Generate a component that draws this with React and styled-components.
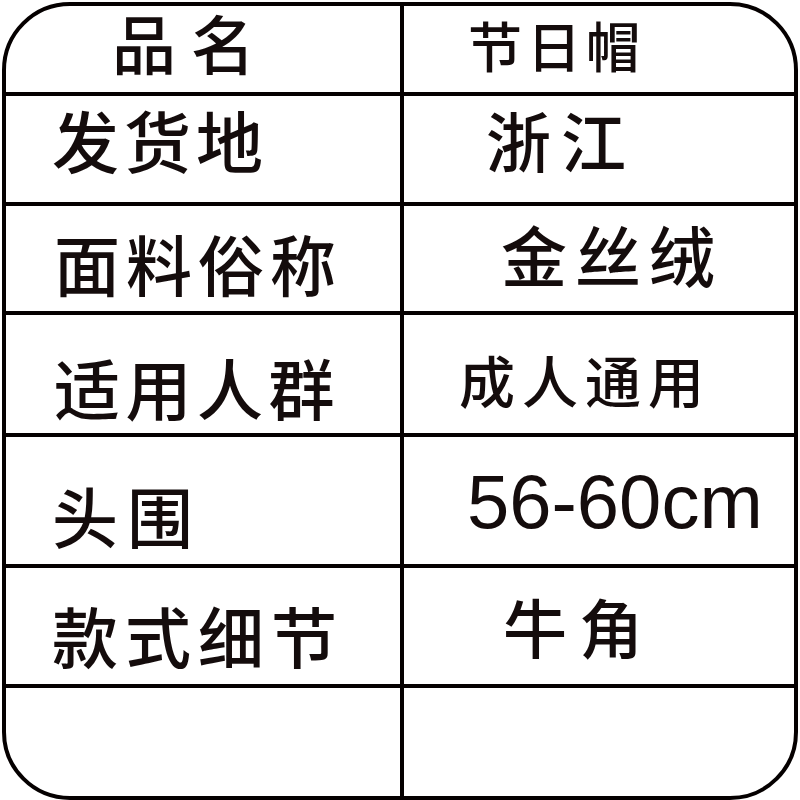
import React from "react";
import styled, { createGlobalStyle } from "styled-components";

const Global = createGlobalStyle`
  html, body { margin: 0; padding: 0; background: #fff; }
  body { width: 800px; height: 800px; overflow: hidden; }
`;

const Page = styled.div`
  width: 800px;
  height: 800px;
  padding: 2px 2px 0 2px;
  box-sizing: border-box;
  background: #fff;
`;

const Table = styled.div`
  width: 796px;
  height: 798px;
  box-sizing: border-box;
  border: 4px solid #050000;
  border-radius: 68px;
  display: flex;
  flex-direction: column;
`;

const Row = styled.div`
  display: flex;
  height: ${(p) => p.$h}px;
  flex: none;
  border-bottom: ${(p) => (p.$last ? "none" : "4px solid #050000")};
`;

const Cell = styled.div`
  display: flex;
  align-items: center;
  box-sizing: border-box;
  height: 100%;
  width: ${(p) => (p.$left ? "398px" : "auto")};
  flex: ${(p) => (p.$left ? "none" : "1")};
  border-right: ${(p) => (p.$left ? "4px solid #050000" : "none")};
  padding-left: ${(p) => p.$x}px;
  padding-top: ${(p) => (p.$dy > 0 ? p.$dy * 2 : 0)}px;
  padding-bottom: ${(p) => (p.$dy < 0 ? -p.$dy * 2 : 0)}px;
`;

const Label = styled.span`
  font-family: "Noto Sans CJK SC", "Noto Sans", sans-serif;
  font-weight: 500;
  color: #140c0c;
  font-size: ${(p) => p.$size}px;
  letter-spacing: ${(p) => p.$ls}px;
  line-height: 1;
  white-space: nowrap;
`;

const Latin = styled(Label)`
  font-family: "Liberation Sans", Arial, sans-serif;
  font-weight: 400;
  letter-spacing: 0;
`;

const rows = [
  { h: 86, l: { t: "品名", x: 106, dy: -8, s: 64, ls: 15 }, r: { t: "节日帽", x: 64, dy: -4, s: 54, ls: 5 } },
  { h: 106, l: { t: "发货地", x: 46, dy: -11, s: 67, ls: 5 }, r: { t: "浙江", x: 82, dy: -10, s: 65, ls: 10 } },
  { h: 105, l: { t: "面料俗称", x: 48, dy: 3, s: 66, ls: 6 }, r: { t: "金丝绒", x: 97, dy: -6, s: 66, ls: 8 } },
  { h: 118, l: { t: "适用人群", x: 48, dy: 12, s: 66, ls: 5.5 }, r: { t: "成人通用", x: 55, dy: 5, s: 56, ls: 7 } },
  { h: 127, l: { t: "头围", x: 46, dy: 13, s: 66, ls: 9 }, r: { t: "56-60cm", x: 63, dy: 1, s: 76, latin: true } },
  { h: 116, l: { t: "款式细节", x: 46, dy: 8, s: 66, ls: 7 }, r: { t: "牛角", x: 99, dy: -1, s: 64, ls: 12 } },
  { h: 108 },
];

function Content({ c }) {
  if (!c) return null;
  if (c.latin) return <Latin $size={c.s}>{c.t}</Latin>;
  return (
    <Label $size={c.s} $ls={c.ls}>
      {c.t}
    </Label>
  );
}

export default function App() {
  return (
    <>
      <Global />
      <Page>
        <Table>
          {rows.map((r, i) => (
            <Row key={i} $h={r.h} $last={i === rows.length - 1}>
              <Cell $left $x={r.l ? r.l.x : 0} $dy={r.l ? r.l.dy : 0}>
                <Content c={r.l} />
              </Cell>
              <Cell $x={r.r ? r.r.x : 0} $dy={r.r ? r.r.dy : 0}>
                <Content c={r.r} />
              </Cell>
            </Row>
          ))}
        </Table>
      </Page>
    </>
  );
}
